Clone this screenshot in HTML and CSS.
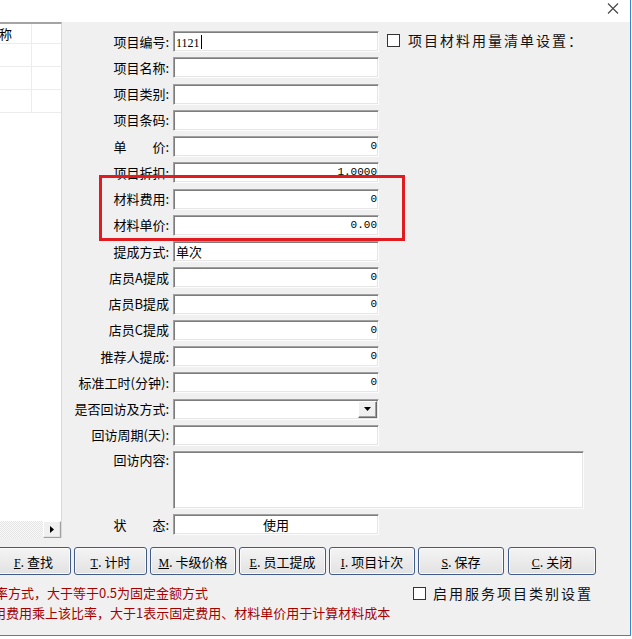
FILE: index.html
```html
<!DOCTYPE html>
<html>
<head>
  <meta charset="utf-8">
  <title>项目设置</title>
  <link rel="stylesheet" href="styles.css">
</head>
<body>

  <div class="window">
    <div class="titlebar">
      <svg class="close" width="12" height="11" viewBox="0 0 12 11">
        <path d="M1 0.5 L11 10.5 M11 0.5 L1 10.5" stroke="#444" stroke-width="1.1" fill="none"/>
      </svg>
    </div>

    <div class="client">
      <div class="main">
        <!-- item list (scrolled right, first column partly hidden) -->
        <div class="list">
          <div class="grid-wrap">
            <table class="grid">
              <tr class="head"><td class="c1">名称</td><td class="c2"></td></tr>
              <tr><td class="c1"></td><td class="c2"></td></tr>
              <tr><td class="c1"></td><td class="c2"></td></tr>
              <tr><td class="c1"></td><td class="c2"></td></tr>
            </table>
          </div>
          <div class="hscroll">
            <div class="track"></div>
            <div class="arrow">
              <svg width="4" height="7" viewBox="0 0 4 7"><path d="M0 0 L4 3.5 L0 7 Z" fill="#000"/></svg>
            </div>
          </div>
        </div>

        <div class="form">
          <label class="lbl">项目编号:</label>
          <div class="field text"><span class="code">1121</span><span class="caret"></span></div>
          <div class="opt top-opt"><span class="box"></span><span class="opt-text">项目材料用量清单设置：</span></div>

          <label class="lbl">项目名称:</label>
          <div class="field"></div>

          <label class="lbl">项目类别:</label>
          <div class="field"></div>

          <label class="lbl">项目条码:</label>
          <div class="field"></div>

          <label class="lbl">单　　价:</label>
          <div class="field num">0</div>

          <label class="lbl">项目折扣:</label>
          <div class="field num">1.0000</div>

          <label class="lbl">材料费用:</label>
          <div class="field num">0</div>

          <label class="lbl">材料单价:</label>
          <div class="field num">0.00</div>

          <label class="lbl">提成方式:</label>
          <div class="field text">单次</div>

          <label class="lbl">店员A提成</label>
          <div class="field num">0</div>

          <label class="lbl">店员B提成</label>
          <div class="field num">0</div>

          <label class="lbl">店员C提成</label>
          <div class="field num">0</div>

          <label class="lbl">推荐人提成:</label>
          <div class="field num">0</div>

          <label class="lbl">标准工时(分钟):</label>
          <div class="field num">0</div>

          <label class="lbl">是否回访及方式:</label>
          <div class="field combo">
            <span class="drop">
              <svg width="7" height="4" viewBox="0 0 7 4"><path d="M0 0 L7 0 L3.5 4 Z" fill="#000"/></svg>
            </span>
          </div>

          <label class="lbl">回访周期(天):</label>
          <div class="field"></div>

          <label class="lbl lbl-top">回访内容:</label>
          <div class="field memo"></div>

          <label class="lbl">状　　态:</label>
          <div class="field center">使用</div>
        </div>

        <div class="mark"></div>
      </div>

      <div class="buttons">
        <button class="btn first"><u>F</u>. 查找</button>
        <button class="btn small"><u>T</u>. 计时</button>
        <button class="btn"><u>M</u>. 卡级价格</button>
        <button class="btn wide"><u>E</u>. 员工提成</button>
        <button class="btn"><u>I</u>. 项目计次</button>
        <button class="btn"><u>S</u>. 保存</button>
        <button class="btn last"><u>C</u>. 关闭</button>
      </div>

      <div class="footer">
        <div class="notes">
          <div class="note n1">率方式，大于等于0.5为固定金额方式</div>
          <div class="note n2">用费用乘上该比率，大于1表示固定费用、材料单价用于计算材料成本</div>
        </div>
        <div class="opt"><span class="box"></span><span class="opt-text">启用服务项目类别设置</span></div>
      </div>
    </div>
  </div>

</body>
</html>
```

FILE: styles.css
```css
body {
  margin: 0;
  background: #fff;
  font-family: "Noto Sans CJK SC", "Noto Sans", sans-serif;
  font-size: 13px;
  color: #000;
}
.window {
  width: 630px;
  height: 635px;
  border-right: 1px solid #3a84cf;
  border-bottom: 1px solid #3a84cf;
  display: flex;
  flex-direction: column;
  overflow: hidden;
}
.titlebar {
  height: 22px;
  background: #fff;
  display: flex;
  justify-content: flex-end;
}
.close {
  margin: 3px 11px 0 0;
}
.client {
  flex: 1;
  background: #f0f0f0;
}
.main {
  position: relative;
  display: flex;
  align-items: flex-start;
}

/* list on the left */
.list {
  width: 61px;
  height: 514px;
  background: #fff;
  border-top: 2px solid #a4a4a4;
  border-right: 1px solid #dadada;
  display: flex;
  flex-direction: column;
}
.grid-wrap {
  flex: 1;
  overflow: hidden;
}
.grid {
  border-collapse: collapse;
  margin-left: -14px;
}
.grid td {
  height: 22px;
  padding: 0;
  border-bottom: 1px solid #ececec;
  line-height: 14px;
  vertical-align: top;
}
.grid .head td {
  height: 16px;
  padding-top: 3px;
}
.grid .c1 {
  width: 57px;
  border-right: 1px solid #ececec;
}
.grid .c2 {
  width: 40px;
}
.hscroll {
  height: 17px;
  display: flex;
}
.hscroll .track {
  flex: 1;
  background: repeating-conic-gradient(#e4e4e4 0 25%, #fafafa 0 50%) 0 0 / 2px 2px;
}
.hscroll .arrow {
  width: 16px;
  background: #f0f0f0;
  border-top: 1px solid #fff;
  border-left: 1px solid #fff;
  border-right: 1px solid #a0a0a0;
  border-bottom: 1px solid #a0a0a0;
  box-shadow: inset -1px -1px #e3e3e3;
  display: flex;
  align-items: center;
  justify-content: center;
}

/* form fields */
.form {
  flex: 1;
  display: grid;
  grid-template-columns: 111px 206px 1fr;
  grid-auto-rows: minmax(21px, auto);
  row-gap: 5.25px;
  padding-top: 9px;
}
.lbl {
  grid-column: 1;
  align-self: center;
  text-align: right;
  padding-right: 4px;
  white-space: nowrap;
  line-height: 16px;
}
.lbl-top {
  align-self: start;
  padding-top: 1px;
}
.field {
  grid-column: 2;
  box-sizing: border-box;
  height: 21px;
  background: #fff;
  border: 1px solid;
  border-color: #a0a0a0 #fcfcfc #fcfcfc #a0a0a0;
  box-shadow: inset 1px 1px #7d7d7d, inset -1px -1px #e6e6e6;
  line-height: 19px;
  padding: 0 3px;
  overflow: hidden;
  white-space: nowrap;
}
.field.num {
  text-align: right;
  font-family: "Liberation Mono", monospace;
  font-size: 11px;
  padding-right: 1px;
}
.field.text {
  padding-left: 2px;
}
.field.center {
  text-align: center;
}
.code {
  font-family: "Liberation Serif", serif;
  font-size: 12px;
}
.caret {
  display: inline-block;
  width: 1px;
  height: 14px;
  background: #000;
  margin-left: 1px;
  vertical-align: -2px;
}
.field.combo {
  display: flex;
  justify-content: flex-end;
  align-items: center;
  padding: 0 1px;
}
.drop {
  width: 17px;
  height: 15px;
  background: #f0f0f0;
  border-top: 1px solid #fff;
  border-left: 1px solid #fff;
  border-right: 1px solid #696969;
  border-bottom: 1px solid #696969;
  box-shadow: inset -1px -1px #a0a0a0;
  display: flex;
  align-items: center;
  justify-content: center;
}
.field.memo {
  grid-column: 2 / 4;
  width: 411px;
  height: 58px;
}

/* checkbox options */
.opt {
  display: flex;
  align-items: center;
  font-size: 14px;
  letter-spacing: 2px;
  color: #111;
}
.top-opt {
  grid-column: 3;
  grid-row: 1;
  margin-left: 8px;
  align-self: start;
  margin-top: -1px;
}
.box {
  width: 11px;
  height: 11px;
  border: 1px solid #333;
  background: #fff;
  margin-right: 8px;
  flex: none;
}

/* highlight frame */
.mark {
  position: absolute;
  left: 99px;
  top: 153px;
  width: 306px;
  height: 66px;
  box-sizing: border-box;
  border: 3px solid #e11b1f;
  pointer-events: none;
}

/* button row */
.buttons {
  display: flex;
  gap: 3px;
  margin: 9px 0 0 -4px;
}
.btn {
  width: 86px;
  height: 28px;
  padding: 0;
  font-family: "Noto Sans CJK SC", sans-serif;
  font-size: 13px;
  color: #000;
  background: linear-gradient(#f4f4f4, #e2e2e2);
  border: 1px solid #3f5b86;
  border-radius: 3px;
  box-shadow: inset 0 0 0 1px #fafafa;
}
.btn u {
  font-family: "Liberation Serif", serif;
  font-size: 12px;
}
.btn.first {
  width: 75px;
}
.btn.small {
  width: 73px;
}
.btn.wide {
  width: 87px;
}
.btn.last {
  width: 88px;
  margin-left: 1px;
}

/* notes at the bottom */
.footer {
  display: flex;
  padding-top: 8px;
}
.notes {
  width: 413px;
  flex: none;
  overflow: hidden;
}
.note {
  color: #a50000;
  font-size: 13px;
  line-height: 20px;
  white-space: nowrap;
}
.note.n1 {
  margin-left: -5px;
}
.note.n2 {
  margin-left: -7px;
}
.footer .opt {
  align-self: flex-start;
  line-height: 20px;
}
.footer .box {
  margin-right: 7px;
}
```
